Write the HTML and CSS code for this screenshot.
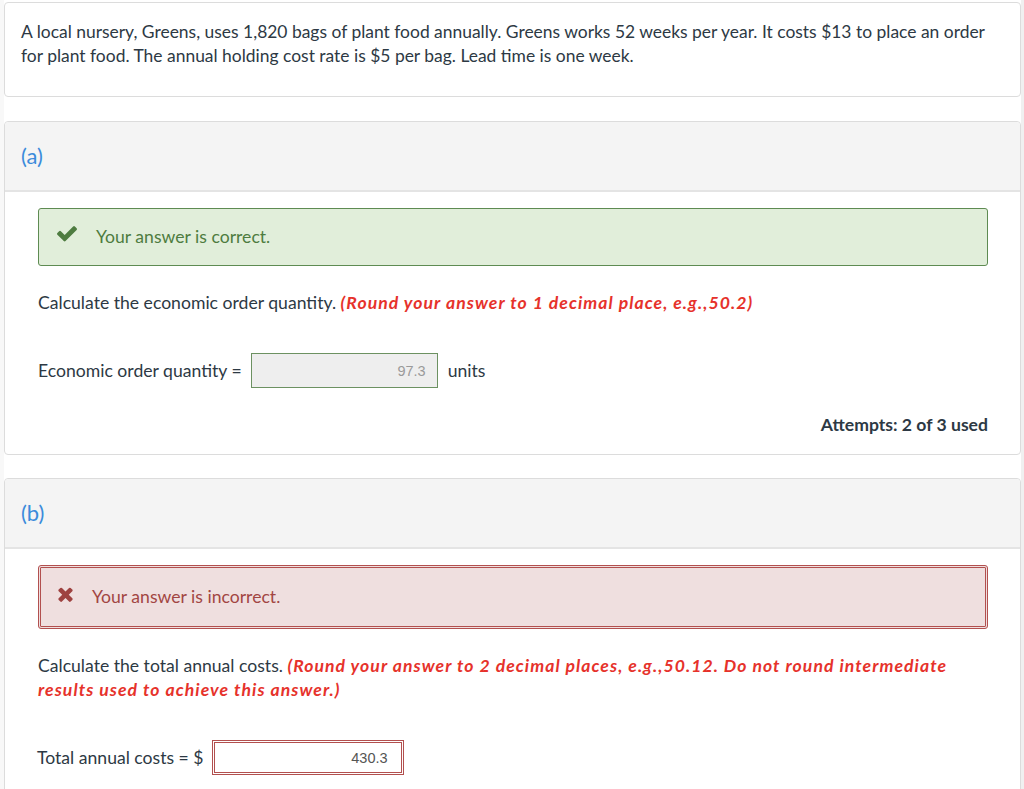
FILE: index.html
```html
<!DOCTYPE html>
<html>
<head>
<meta charset="utf-8">
<link rel="stylesheet" href="styles.css">
</head>
<body>
<div class="page">
  <div class="card intro">
    <p>A local nursery, Greens, uses 1,820 bags of plant food annually. Greens works 52 weeks per year. It costs $13 to place an order for plant food. The annual holding cost rate is $5 per bag. Lead time is one week.</p>
  </div>

  <div class="card part part-a">
    <div class="part-head">(a)</div>
    <div class="part-body">
      <div class="alert alert-ok">
        <svg class="ico-check" viewBox="121 330 1550 1230" width="20" height="16"><path fill="#4e7c40" d="M1671 566q0 40-28 68l-724 724-136 136q-28 28-68 28t-68-28l-136-136-362-362q-28-28-28-68t28-68l136-136q28-28 68-28t68 28l294 295 656-657q28-28 68-28t68 28l136 136q28 28 28 68z"/></svg>
        <span>Your answer is correct.</span>
      </div>
      <p class="question">Calculate the economic order quantity. <span class="hint">(Round your answer to 1 decimal place, e.g.,50.2)</span></p>
      <div class="answer-row">
        <span class="label">Economic order quantity =</span>
        <span class="field field-ok">97.3</span>
        <span class="unit">units</span>
      </div>
      <div class="attempts">Attempts: 2 of 3 used</div>
    </div>
  </div>

  <div class="card part">
    <div class="part-head">(b)</div>
    <div class="part-body">
      <div class="alert alert-bad">
        <svg class="ico-x" viewBox="110 230 1188 1332" width="15" height="16"><path fill="#9e4240" d="M1298 1322q0 40-28 68l-136 136q-28 28-68 28t-68-28l-294-294-294 294q-28 28-68 28t-68-28l-136-136q-28-28-28-68t28-68l294-294-294-294q-28-28-28-68t28-68l136-136q28-28 68-28t68 28l294 294 294-294q28-28 68-28t68 28l136 136q28 28 28 68t-28 68l-294 294 294 294q28 28 28 68z"/></svg>
        <span>Your answer is incorrect.</span>
      </div>
      <p class="question">Calculate the total annual costs. <span class="hint">(Round your answer to 2 decimal places, e.g.,50.12. Do not round intermediate results used to achieve this answer.)</span></p>
      <div class="answer-row">
        <span class="label label-cost">Total annual costs = $</span>
        <span class="field field-bad">430.3</span>
      </div>
    </div>
  </div>
</div>
</body>
</html>
```

FILE: styles.css
```css
html, body {
  margin: 0;
  padding: 0;
  background: #ffffff;
}
body {
  font-family: Lato, "Liberation Sans", sans-serif;
  font-size: 17.6px;
  line-height: 24px;
  color: #2d3944;
}
.page {
  width: 1024px;
  height: 789px;
  box-sizing: border-box;
  border-left: 4px solid #f8f8f8;
  border-right: 3px solid #f0f0f0;
  padding-top: 2px;
  overflow: hidden;
}
.card {
  border: 1px solid #dcdcdc;
  border-radius: 4px;
  background: #fff;
  margin-bottom: 24px;
}
.intro {
  padding: 17px 16px 28px 16px;
  font-size: 17.45px;
}
.intro p {
  margin: 0;
}
.part-a {
  margin-bottom: 23px;
}
.part-head {
  background: #f4f4f4;
  border-bottom: 2px solid #e4e4e4;
  border-radius: 4px 4px 0 0;
  height: 68px;
  padding-left: 16px;
  display: flex;
  align-items: center;
  font-size: 22px;
  color: #3b8bdb;
}
.part-body {
  padding: 16px 32px 17px 33px;
}
.alert {
  display: flex;
  align-items: center;
  border-radius: 3px;
  box-sizing: border-box;
}
.alert-ok {
  height: 58px;
  background: #e1eeda;
  border: 1px solid #5e8b52;
  color: #4e7c40;
  padding-left: 18px;
}
.alert-ok .ico-check {
  margin-right: 19px;
  margin-top: -6px;
}
.alert-bad {
  height: 64px;
  background: #efdfdf;
  border: 3px double #b2504f;
  color: #a24643;
  padding-left: 17px;
}
.alert-bad .ico-x {
  margin-right: 19px;
  margin-top: -6px;
}
.question {
  margin: 25px 0 0 0;
}
.hint {
  color: #e6322b;
  font-weight: bold;
  font-style: italic;
  letter-spacing: 1.05px;
}
.answer-row {
  display: flex;
  align-items: center;
  margin-top: 38px;
}
.label {
  margin-right: 9px;
}
.label-cost {
  margin-left: -1px;
  margin-right: 8px;
}
.field {
  box-sizing: border-box;
  height: 35px;
  display: flex;
  align-items: center;
  justify-content: flex-end;
  font-family: "Liberation Sans", Arial, sans-serif;
  font-size: 14.5px;
}
.field-ok {
  width: 187px;
  background: #eeeeee;
  border: 1px solid #6c9161;
  color: #9a9a9a;
  padding-right: 11px;
}
.field-bad {
  width: 192px;
  background: #fff;
  border: 3px double #b2504f;
  color: #555;
  padding-right: 13px;
}
.unit {
  margin-left: 10px;
}
.attempts {
  margin-top: 25px;
  text-align: right;
  font-weight: bold;
}
```
